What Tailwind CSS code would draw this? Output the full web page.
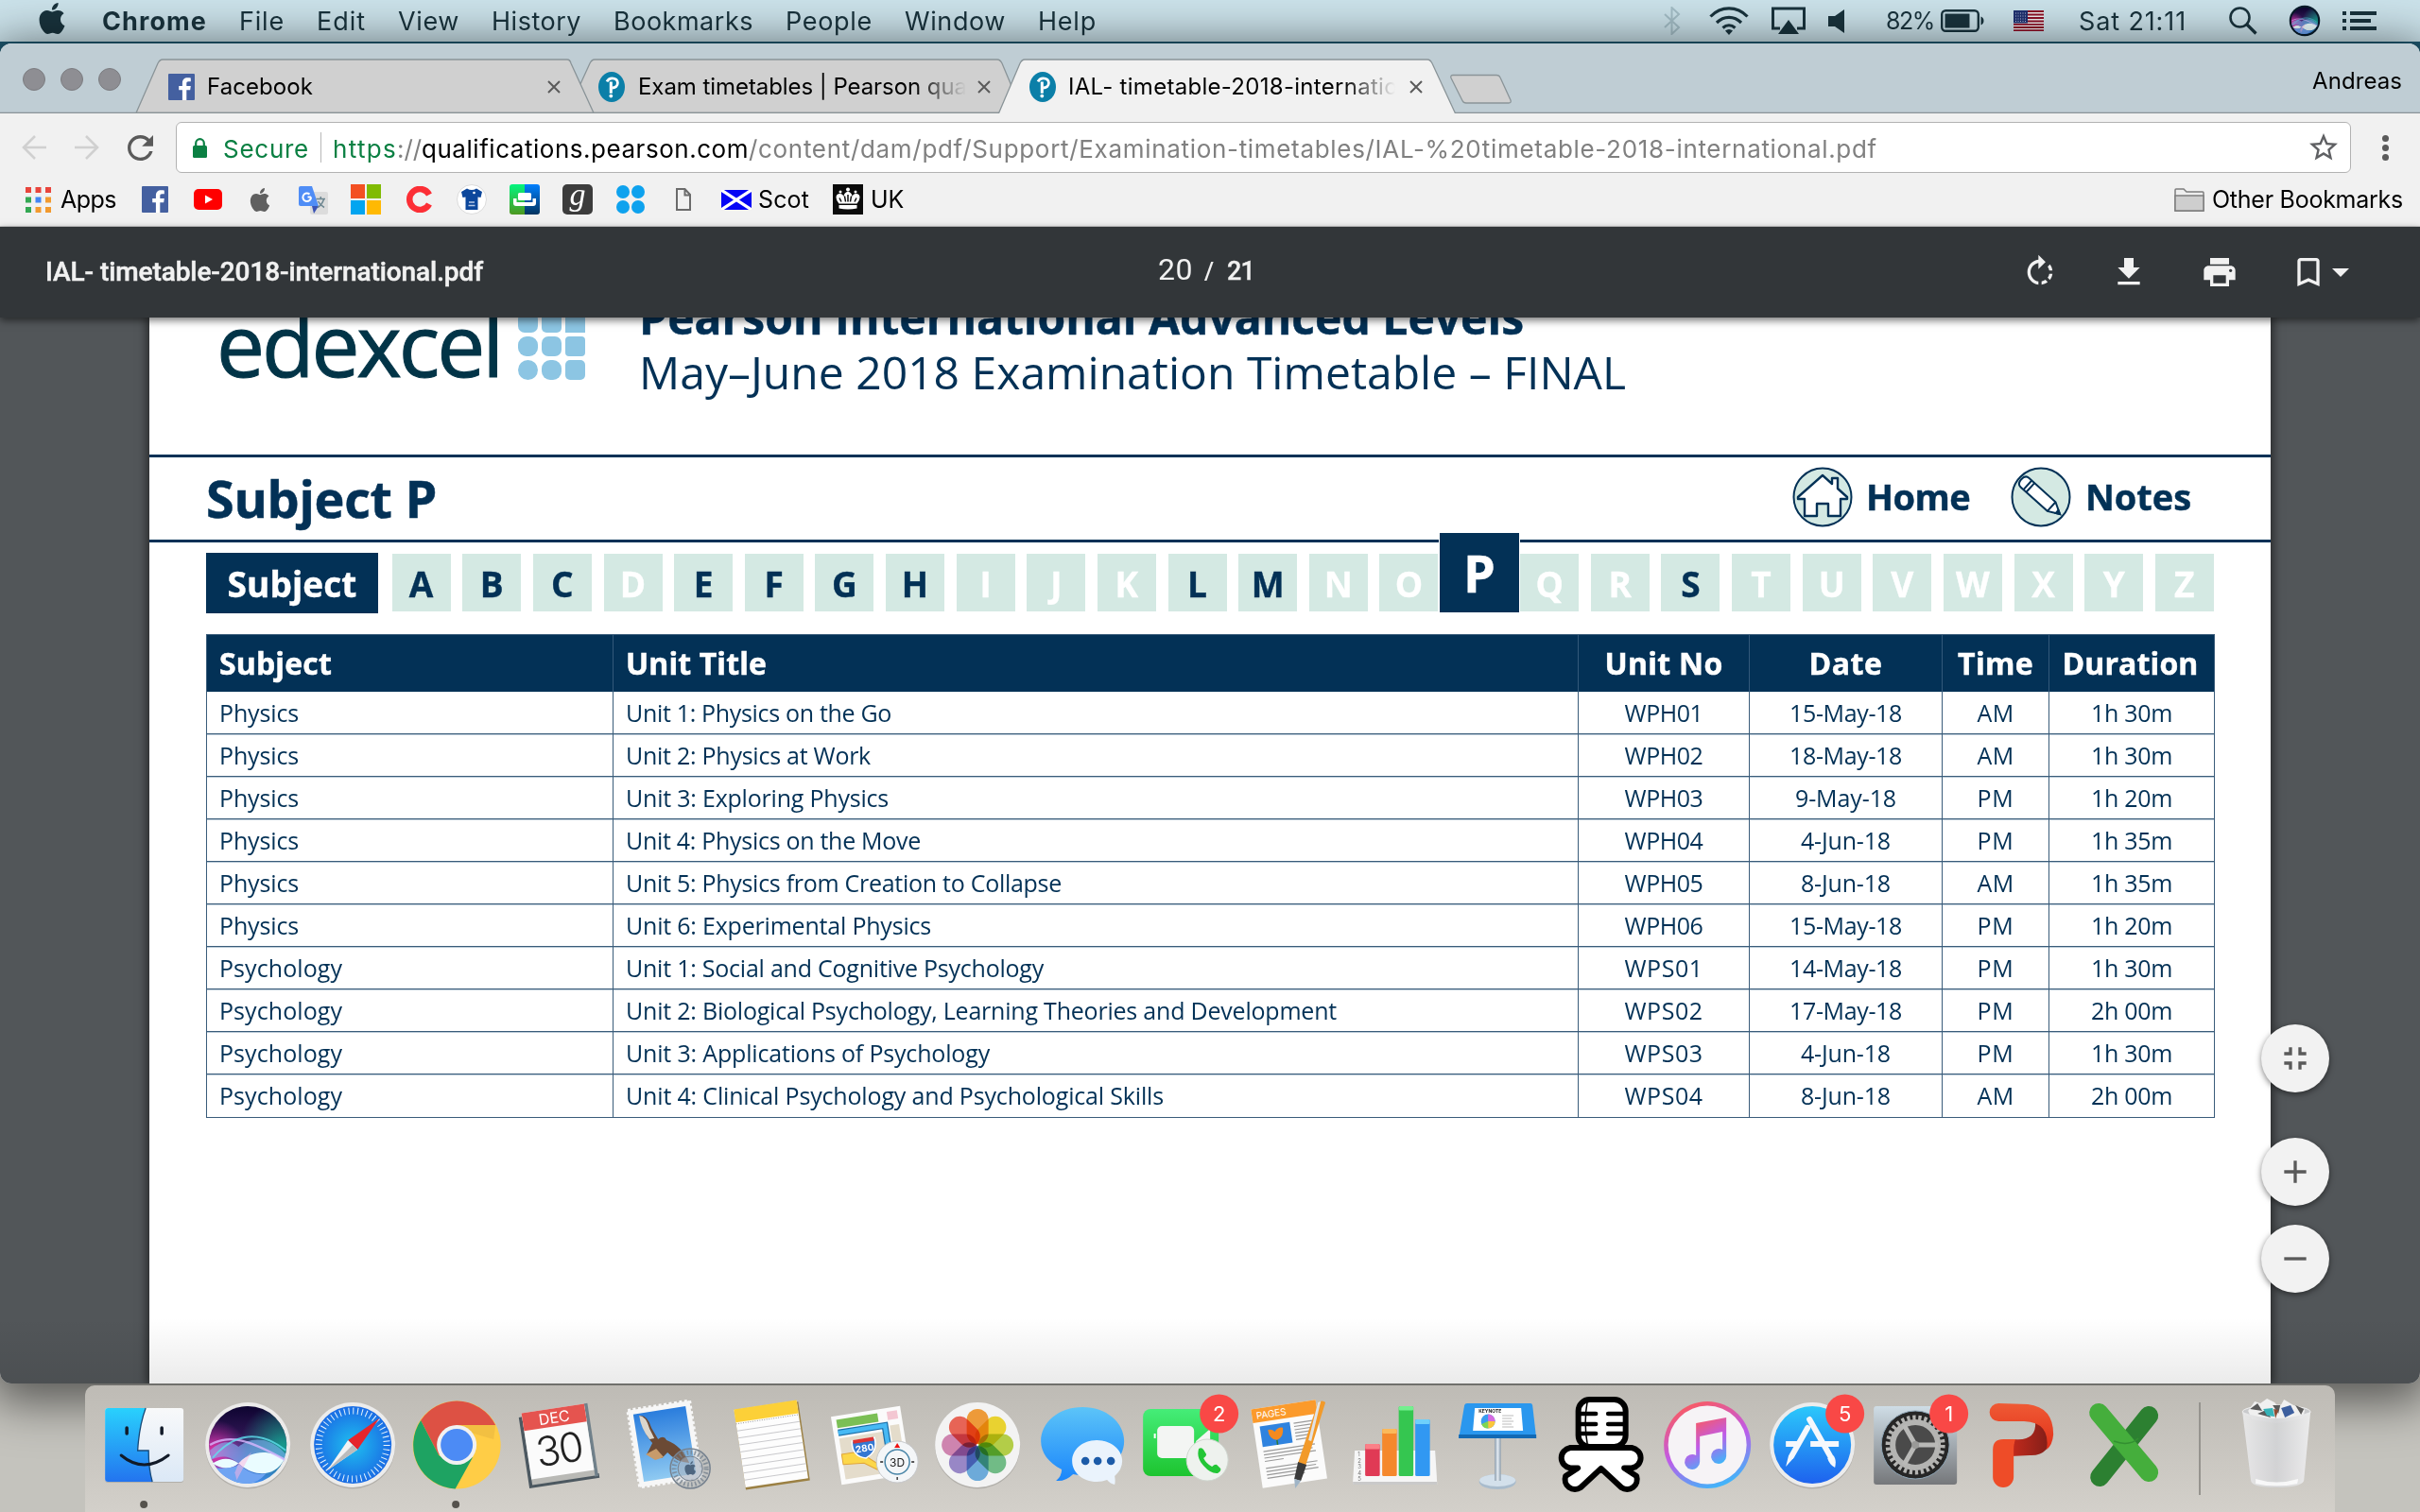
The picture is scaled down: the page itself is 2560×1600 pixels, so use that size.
<!DOCTYPE html>
<html lang="en">
<head>
<meta charset="utf-8">
<title>IAL- timetable-2018-international.pdf</title>
<script src="https://cdn.jsdelivr.net/npm/@tailwindcss/browser@4"></script>
</head>
<body class="w-[2560px] h-[1600px] overflow-hidden flex flex-col bg-linear-to-b from-[#1f5a72] from-10% to-[#c4c3bd] to-80% font-['Inter',sans-serif]">

<svg class="absolute size-0">
  <defs>
    <symbol id="apple" viewBox="2 0 20 24"><path d="M12.152 6.896c-.948 0-2.415-1.078-3.96-1.04-2.04.027-3.91 1.183-4.961 3.014-2.117 3.675-.546 9.103 1.519 12.09 1.013 1.454 2.208 3.09 3.792 3.039 1.52-.065 2.09-.987 3.935-.987 1.831 0 2.35.987 3.96.948 1.637-.026 2.676-1.48 3.676-2.948 1.156-1.688 1.636-3.325 1.662-3.415-.039-.013-3.182-1.221-3.22-4.857-.026-3.04 2.48-4.494 2.597-4.559-1.429-2.09-3.623-2.324-4.39-2.376-2-.156-3.675 1.09-4.61 1.09zM15.53 3.83c.843-1.012 1.4-2.427 1.245-3.83-1.207.052-2.662.805-3.532 1.818-.78.896-1.454 2.338-1.273 3.714 1.338.104 2.715-.688 3.559-1.701"/></symbol>
    <symbol id="fb" viewBox="0 0 28 28"><rect width="28" height="28" rx="1" fill="#4460a0"/><path fill="#fff" d="M19.3 28V17.2h3.9l.6-4.2h-4.5v-2.7c0-1.2.4-2 2.1-2h2.4V4.5c-.4 0-1.9-.2-3.5-.2-3.2 0-5.4 2-5.4 5.6V13h-3.7v4.2h3.7V28z"/></symbol>
    <symbol id="pearson" viewBox="0 0 28 32"><ellipse cx="14" cy="16" rx="14" ry="16" fill="#0b7fa8"/><path d="M9 10.400c1.200-2.400 3-3.600 5.600-3.600 3.400 0 5.800 2 5.800 5 0 3.200-2.400 5.200-6 5.200" fill="none" stroke="#fff" stroke-width="2.800"/><path d="M13.300 10.500v12.200" stroke="#fff" stroke-width="3"/><circle cx="13.300" cy="25.600" r="1.900" fill="#fff"/></symbol>
    <symbol id="close" viewBox="0 0 14 14"><path d="M1 1l12 12M13 1L1 13" stroke="#5a5a5a" stroke-width="2"/></symbol>
    <linearGradient id="siriBg" x2="0" y2="1"><stop offset="0" stop-color="#0d0430"/><stop offset=".35" stop-color="#2c1450"/><stop offset=".6" stop-color="#3c4a9c"/><stop offset="1" stop-color="#3f8ff0"/></linearGradient>
    <radialGradient id="siriGreen" cx=".95" cy=".5" r=".55"><stop offset="0" stop-color="#12a48c" stop-opacity=".9"/><stop offset="1" stop-color="#12a48c" stop-opacity="0"/></radialGradient>
    <radialGradient id="siriPink" cx=".08" cy=".6" r=".42"><stop offset="0" stop-color="#ff2aa0"/><stop offset="1" stop-color="#c030b0" stop-opacity="0"/></radialGradient>
    <symbol id="siri" viewBox="-45 -45 90 90">
      <circle r="42" fill="url(#siriBg)"/>
      <circle r="42" fill="url(#siriGreen)"/>
      <circle r="42" fill="url(#siriPink)"/>
      <path d="M-41 6C-28-6-18-4-10 2C4-10 26-8 41 10L39 18C20 10 4 6-10 20C-22 10-30 12-40 16z" fill="#7fb6f5" opacity=".6"/>
      <path d="M-38 20C-28 13-18 14-10 20C2 6 24 4 39 16C30 34 8 36-10 20C-18 27-28 27-38 20z" fill="#eafcff"/>
      <path d="M-34 25C-22 26-14 24-9 21C0 30 10 33 20 31Q10 42 0 42A42 42 0 0 1-34 25z" fill="#6fa4f2"/>
      <path d="M-10 20L4 8-12 38-14 30z" fill="#ffb4e0" opacity=".5"/>
      <path d="M-41 0C-20-12 0-6 40 16" fill="none" stroke="#d9b6ff" stroke-width="2.500" opacity=".8"/>
      <path d="M-38 14C-14-14 14-16 41 6" fill="none" stroke="#5fe0ee" stroke-width="2" opacity=".8"/>
    </symbol>
  </defs>
</svg>

<!-- Menu bar -->
<header class="h-11 shrink-0 flex items-center pl-[41px] pr-[46px] bg-[#cbe2ea] text-[#19333d] text-[27px] leading-none">
  <svg class="w-[28px] h-[33px] -mt-[5px] mr-[39px] shrink-0 fill-[#19333d]"><use href="#apple"/></svg>
  <nav class="flex gap-[34px]">
    <span data-w="111" class="font-bold">Chrome</span><span data-w="48">File</span><span data-w="52">Edit</span><span data-w="65">View</span><span data-w="95">History</span><span data-w="148">Bookmarks</span><span data-w="92">People</span><span data-w="107">Window</span><span data-w="62">Help</span>
  </nav>
  <div class="ml-auto flex items-center">
    <svg class="w-[18px] h-[30px]" viewBox="0 0 18 30" fill="none" stroke="#a3bdc6" stroke-width="2"><path d="M1 8l15 14-7.500 7V1L16 8 1 22"/></svg>
    <svg class="ml-[30px] w-[42px] h-[30px]" viewBox="0 0 42 30" fill="none" stroke="#19333d" stroke-width="3.200"><path d="M1.500 10.500C12.500-1 29.500-1 40.500 10.500M8 17c7.500-7.500 18.500-7.500 26 0M14.500 22.500c4-3.500 9-3.500 13 0"/><path d="M17 25.500q4-3 8 0L21 30z" fill="#19333d" stroke="none"/></svg>
    <svg class="ml-[24px] w-[36px] h-[30px]" viewBox="0 0 36 30"><path d="M9 23H1.500V2h33v21H27" fill="none" stroke="#19333d" stroke-width="3"/><path d="M18 14l11 15H7z" fill="#19333d"/></svg>
    <svg class="ml-[24px] w-[17px] h-[25px]" viewBox="0 0 17 25"><path d="M0 7h7l10-7v25L7 18H0z" fill="#19333d"/></svg>
    <span class="ml-[44px] text-[25px]" data-w="51">82%</span>
    <svg class="ml-[7px] w-[47px] h-[24px]" viewBox="0 0 47 24"><rect x="1.200" y="1.200" width="38.600" height="21.600" rx="4" fill="none" stroke="#19333d" stroke-width="2.400"/><rect x="4.500" y="4.500" width="26" height="15" fill="#19333d"/><path d="M42.500 7.500c4 1 4 8 0 9z" fill="#19333d"/></svg>
    <svg class="ml-[30px] w-[32px] h-[22px]" viewBox="0 0 32 22"><rect width="32" height="22" fill="#f0f0f0"/><path d="M0 1h32M0 4.500h32M0 8h32M0 11.500h32M0 14.800h32M0 18h32M0 21.200h32" stroke="#8d1027" stroke-width="1.800"/><rect width="15" height="13.500" fill="#1f3170"/><path d="M2 3h12M2 6h12M2 9h12M2 11.500h12" stroke="#b9c3dd" stroke-width="1" stroke-dasharray="1 1.500"/></svg>
    <span class="ml-[37px]" data-w="114">Sat 21:11</span>
    <svg class="ml-[45px] w-[30px] h-[30px]" viewBox="0 0 30 30" fill="none" stroke="#19333d" stroke-width="2.600"><circle cx="11.500" cy="11.500" r="10"/><path d="M18.500 18.500l10 10" stroke-width="3.200"/></svg>
    <svg class="ml-[33px] w-[34px] h-[34px]" viewBox="-45 -45 90 90"><circle r="43" fill="#071a2a"/><use href="#siri" x="-40" y="-40" width="80" height="80"/></svg>
    <svg class="ml-[23px] w-[36px] h-[20px]" viewBox="0 0 36 20"><path d="M0 2h4M8 2h28M0 10h4M8 10h22M0 18h4M8 18h28" stroke="#19333d" stroke-width="4"/></svg>
  </div>
</header>

<!-- Browser window -->
<main class="relative mt-[2px] h-[1418px] shrink-0 flex flex-col overflow-hidden rounded-xl bg-[#f1f1f1] shadow-[0_10px_50px_10px_rgba(0,0,0,.55)]">

  <!-- Tab strip -->
  <div class="relative h-[74px] shrink-0 bg-[#bfcdd4]">
    <svg class="absolute inset-0 w-[2560px] h-[74px]" viewBox="0 0 2560 74">
      <path d="M600 73.500L624 21q2-4 5-4h426q3 0 5 4l22 52.500z" fill="#d0d0d0" stroke="#8a9498" stroke-width="1.300"/>
      <path d="M144 73.500L167 21q2-4 5-4h428q3 0 4 4l24 52.500z" fill="#d0d0d0" stroke="#8a9498" stroke-width="1.300"/>
      <path d="M0 73.400h2560" stroke="#8a9498" stroke-width="1.300"/>
      <path d="M1056 75L1079 21q2-4 5-4h426q3 0 5 4l25 54z" fill="#f1f1f1" stroke="#8a9498" stroke-width="1.300"/>
      <path d="M1537 33.500h46q3 0 4 2.500l11 24q1 3-2 3h-45q-3 0-4-2.500l-12-24q-1-3 2-3z" fill="#d0d0d0" stroke="#8a9498" stroke-width="1.300"/>
    </svg>
    <div class="relative flex items-center h-[56px] top-[17px] pl-[24px] pr-[19px] text-[24px] leading-none text-black">
      <div class="flex gap-4 -mt-[14px]"><i class="size-6 rounded-full bg-[#8e8e93] border border-[#7b7c80]"></i><i class="size-6 rounded-full bg-[#8e8e93] border border-[#7b7c80]"></i><i class="size-6 rounded-full bg-[#8e8e93] border border-[#7b7c80]"></i></div>
      <svg class="ml-[50px] mt-px size-[28px]"><use href="#fb"/></svg>
      <span class="ml-[13px] mt-px" data-w="112">Facebook</span>
      <svg class="ml-[248px] mt-[2px] size-[14px]"><use href="#close"/></svg>
      <svg class="ml-[40px] mt-[2px] w-[28px] h-[32px]"><use href="#pearson"/></svg>
      <div class="ml-[14px] mt-px w-[347px] h-8 flex items-center shrink-0 overflow-hidden [mask-image:linear-gradient(to_right,black_84%,transparent)]"><span data-w="348">Exam timetables | Pearson qua</span></div>
      <svg class="ml-[12px] mt-[2px] size-[14px]"><use href="#close"/></svg>
      <svg class="ml-[41px] mt-[2px] w-[28px] h-[32px]"><use href="#pearson"/></svg>
      <div class="ml-[13px] mt-px w-[346px] h-8 flex items-center shrink-0 overflow-hidden [mask-image:linear-gradient(to_right,black_84%,transparent)]"><span data-w="348">IAL- timetable-2018-internatio</span></div>
      <svg class="ml-[15px] mt-[2px] size-[14px]"><use href="#close"/></svg>
      <span class="ml-auto -mt-[10px]" data-w="95">Andreas</span>
    </div>
  </div>

  <!-- Address bar -->
  <div class="h-[63px] pt-[9px] shrink-0 flex items-center pl-[23px]">
    <svg class="w-[26px] h-[26px]" viewBox="0 0 26 26" fill="none" stroke="#d0d0d0" stroke-width="2.600"><path d="M26 13H2M14 1L2 13l12 12"/></svg>
    <svg class="ml-[30px] w-[26px] h-[26px]" viewBox="0 0 26 26" fill="none" stroke="#d0d0d0" stroke-width="2.600"><path d="M0 13h24M12 1l12 12-12 12"/></svg>
    <svg class="ml-[30px] w-[27px] h-[27px]" viewBox="4 4 16 16"><path fill="#5a5a5a" d="M17.650 6.350C16.200 4.900 14.210 4 12 4c-4.420 0-7.990 3.580-7.990 8s3.570 8 7.990 8c3.730 0 6.840-2.550 7.730-6h-2.080c-.82 2.330-3.040 4-5.650 4-3.310 0-6-2.690-6-6s2.690-6 6-6c1.660 0 3.140.69 4.220 1.780L13 11h7V4l-2.350 2.350z"/></svg>
    <div class="ml-[24px] w-[2301px] h-[54px] flex items-center rounded-md border border-[#b2b2b2] bg-white pl-[17px] pr-[13px] text-[26px] leading-none">
      <svg class="w-[15px] h-[21px]" viewBox="0 0 15 21"><rect y="8" width="15" height="13" rx="1.500" fill="#0b8043"/><path d="M3.200 9V5.500a4.300 4.300 0 0 1 8.600 0V9" fill="none" stroke="#0b8043" stroke-width="2.200"/></svg>
      <span class="ml-[17px] mt-[3px] text-[#0b8043]" data-w="91">Secure</span>
      <i class="ml-[12px] w-px h-8 bg-[#b8b8b8]"></i>
      <div class="ml-[12px] mt-[3px] flex"><span class="text-[#0b8043]" data-w="68">https</span><span class="text-[#808080]" data-w="26">://</span><span class="text-black" data-w="346">qualifications.pearson.com</span><span class="text-[#808080]" data-w="1193">/content/dam/pdf/Support/Examination-timetables/IAL-%20timetable-2018-international.pdf</span></div>
      <svg class="ml-auto size-[30px]" viewBox="2 2 20 20"><path fill="#5f6063" d="M22 9.240l-7.190-.62L12 2 9.190 8.630 2 9.240l5.460 4.730L5.820 21 12 17.270 18.180 21l-1.630-7.030L22 9.240zM12 15.400l-3.760 2.270 1-4.280-3.320-2.880 4.380-.38L12 6.100l1.710 4.040 4.380.38-3.320 2.880 1 4.280L12 15.400z"/></svg>
    </div>
    <div class="ml-[33px] flex flex-col gap-[3px]"><i class="size-[7px] rounded-full bg-[#5a5a5a]"></i><i class="size-[7px] rounded-full bg-[#5a5a5a]"></i><i class="size-[7px] rounded-full bg-[#5a5a5a]"></i></div>
  </div>

  <!-- Bookmarks bar -->
  <div class="h-[57px] shrink-0 flex items-center pl-[27px] pr-[18px] border-b border-[#cfcfcf] text-[25px] leading-none text-black">
    <svg class="size-[27px]" viewBox="0 0 27 27"><path fill="#e8453c" d="M0 0h6v6H0zM10.500 0h6v6h-6zM21 0h6v6h-6z"/><path fill="#34a853" d="M0 10.500h6v6H0zM0 21h6v6H0z"/><path fill="#4285f4" d="M10.500 10.500h6v6h-6z"/><path fill="#f29a2e" d="M21 10.500h6v6h-6zM10.500 21h6v6h-6zM21 21h6v6h-6z"/></svg>
    <span class="ml-[10px]" data-w="59">Apps</span>
    <svg class="ml-[27px] size-[28px]"><use href="#fb"/></svg>
    <svg class="ml-[27px] w-[30px] h-[22px]" viewBox="0 0 30 22"><rect width="30" height="22" rx="5" fill="#f00"/><path d="M12 6.500l8 4.500-8 4.500z" fill="#fff"/></svg>
    <svg class="ml-[29px] w-[22px] h-[25px] fill-[#606060]"><use href="#apple"/></svg>
    <svg class="ml-[30px] w-[31px] h-[31px]" viewBox="0 0 31 31"><rect x="12" y="7" width="19" height="24" rx="2" fill="#dcdcdc"/><path d="M14 22h7l-5 8z" fill="#3a52b4"/><path d="M2 1h12l7 21H2q-2 0-2-2V3q0-2 2-2z" fill="#4f8df6"/><path d="M13 10.500H9.500M13 10.500a4.300 4.300 0 1 1-1.500-3" transform="translate(0 2)" fill="none" stroke="#fff" stroke-width="2"/><path d="M18.500 14.500h9.500M23.300 12v2.500M26.500 15q-2 6-6.500 8.500M20.500 17q2 4 6.500 6.500" fill="none" stroke="#6d8690" stroke-width="1.500"/></svg>
    <div class="ml-[24px] grid grid-cols-2 gap-[2px] size-[32px]"><i class="bg-[#f35022]"></i><i class="bg-[#80bb03]"></i><i class="bg-[#03a5f0]"></i><i class="bg-[#ffb903]"></i></div>
    <svg class="ml-[26px] w-[28px] h-[28px]" viewBox="0 0 28 28"><path d="M25 9A11 11 0 1 0 25 19" fill="none" stroke="#fc2f36" stroke-width="6.500"/></svg>
    <svg class="ml-[26px] size-[32px]" viewBox="0 0 32 32"><circle cx="16" cy="16" r="15.500" fill="#fff" stroke="#dadada"/><path d="M11 4.500q5 3 10 0l6 3.500-1.500 6-3-.5V27h-13V13.500l-3 .5L5 8z" fill="#0c479c"/><path d="M13 19h6M12.500 22.500h7" stroke="#b6c9e6" stroke-width="1.500"/><circle cx="18.500" cy="9" r="1.300" fill="#fff"/></svg>
    <svg class="ml-[24px] size-[32px]" viewBox="0 0 32 32"><defs><linearGradient id="gl" x2="0" y2="1"><stop stop-color="#02f57f"/><stop offset="1" stop-color="#4d9820"/></linearGradient><linearGradient id="gr" x2="0" y2="1"><stop stop-color="#0080ff"/><stop offset="1" stop-color="#02345f"/></linearGradient></defs><path d="M3 0h13v32H3q-3 0-3-3V3q0-3 3-3z" fill="url(#gl)"/><path d="M16 0h13q3 0 3 3v26q0 3-3 3H16z" fill="url(#gr)"/><rect x="9" y="9" width="14" height="8" rx="1.500" fill="#fff"/><path d="M4 15h3.500v4h17v-4H28v5q0 3-3 3H7q-3 0-3-3z" fill="#fff"/></svg>
    <div class="ml-[24px] size-[32px] rounded-[5px] bg-[#3c3c3c] text-white text-[34px] leading-[22px] italic text-center font-['Liberation_Serif',serif]">g</div>
    <div class="ml-[25px] grid grid-cols-2 gap-[2px] size-[30px]"><i class="rounded-full bg-[#0ea2ee]"></i><i class="rounded-full bg-[#0ea2ee]"></i><i class="rounded-full bg-[#0ea2ee]"></i><i class="rounded-full bg-[#0ea2ee]"></i></div>
    <svg class="ml-[33px] w-[16px] h-[24px]" viewBox="0 0 16 24" fill="none" stroke="#6b6b6b" stroke-width="2"><path d="M1 1h8.500L15 7v16H1zM9.500 1v6.500H15"/></svg>
    <svg class="ml-[32px] w-[32px] h-[21px]" viewBox="0 0 32 21"><rect width="32" height="21" fill="#0505f5"/><path d="M0 0l32 21M32 0L0 21" stroke="#fff" stroke-width="3.200"/></svg>
    <span class="ml-[7px]" data-w="54">Scot</span>
    <svg class="ml-[25px] size-[32px]" viewBox="0 0 32 32"><rect width="32" height="32" fill="#0b0b0b"/><g fill="#fff"><path d="M3.500 14q0-4 4-4 3 0 4 3 0-4 4.500-5.500Q20.500 9 20.500 13q1-3 4-3 4 0 4 4 0 3-3 6.500h-19Q3.500 17 3.500 14z"/><circle cx="16" cy="5.500" r="2"/><circle cx="8" cy="8" r="1.500"/><circle cx="24" cy="8" r="1.500"/><path d="M6.500 22h19v3.500q-9.500 2-19 0z"/></g><path d="M7 14.500l2 4M12.500 12.500l1 6M16 11v7.500M19.500 12.500l-1 6M25 14.500l-2 4" stroke="#0b0b0b" stroke-width="1.500"/></svg>
    <span class="ml-[8px]" data-w="35">UK</span>
    <svg class="ml-auto w-[32px] h-[25px]" viewBox="0 0 32 25" stroke="#7e7e7e" stroke-width="1.500"><path d="M1 24V2q0-1 1-1h8l3 3h17q1 0 1 1v19z" fill="#eee"/><path d="M1 8h30v16H1z" fill="#cecece"/></svg>
    <span class="ml-[8px]" data-w="202">Other Bookmarks</span>
  </div>

  <!-- Viewer toolbar -->
  <div class="relative z-10 h-[96px] shrink-0 flex items-center bg-[#323639] pl-[48px] text-[#f1f1f1] font-['Roboto',sans-serif] shadow-[0_3px_8px_rgba(0,0,0,.55)]">
    <span class="text-[28px] font-medium [-webkit-text-stroke:0.5px]" data-w="463">IAL- timetable-2018-international.pdf</span>
    <span class="ml-[714px] -mt-[6px] text-[32px]" data-w="37">20</span>
    <span class="ml-[12px] -mt-[2px] text-[26px] font-medium" data-w="12">/</span>
    <span class="ml-[12px] -mt-[2px] text-[27px] font-medium [-webkit-text-stroke:0.3px]" data-w="29">21</span>
    <div class="ml-[811px] flex items-center">
      <svg class="size-[40px]" viewBox="0 0 24 24" fill="#f1f1f1"><path d="M15.550 5.550L11 1v3.070C7.060 4.560 4 7.920 4 12s3.050 7.440 7 7.930v-2.020c-2.840-.48-5-2.940-5-5.910s2.160-5.430 5-5.910V10l4.550-4.450zM19.930 11c-.17-1.390-.72-2.730-1.620-3.890l-1.420 1.420c.54.75.88 1.600 1.020 2.470h2.020zM13 17.900v2.020c1.390-.17 2.740-.71 3.900-1.610l-1.440-1.440c-.75.54-1.590.89-2.460 1.030zm3.890-2.420l1.420 1.410c.9-1.160 1.450-2.500 1.620-3.890h-2.020c-.14.87-.48 1.720-1.020 2.480z"/></svg>
      <svg class="ml-[54px] size-[40px]" viewBox="0 0 24 24" fill="#f1f1f1"><path d="M19 9h-4V3H9v6H5l7 7 7-7zM5 18v2h14v-2H5z"/></svg>
      <svg class="ml-[56px] size-[40px]" viewBox="0 0 24 24" fill="#f1f1f1"><path d="M19 8H5c-1.660 0-3 1.340-3 3v6h4v4h12v-4h4v-6c0-1.660-1.340-3-3-3zm-3 11H8v-5h8v5zm3-7c-.55 0-1-.45-1-1s.45-1 1-1 1 .45 1 1-.45 1-1 1zm-1-9H6v4h12V3z"/></svg>
      <svg class="ml-[54px] size-[40px]" viewBox="0 0 24 24" fill="#f1f1f1"><path d="M17 3H7c-1.100 0-1.990.9-1.990 2L5 21l7-3 7 3V5c0-1.100-.9-2-2-2zm0 15l-5-2.180L7 18V5h10v13z"/></svg>
      <svg class="ml-[5px] w-[18px] h-[9px]" viewBox="0 0 18 9" fill="#f1f1f1"><path d="M0 0h18L9 9z"/></svg>
    </div>
  </div>

  <!-- Document -->
  <div class="relative flex-1 flex justify-center overflow-hidden bg-[#525659]">
    <article class="w-[2244px] flex flex-col bg-white text-[#033156] font-['Open_Sans',sans-serif] shadow-[0_0_10px_2px_rgba(0,0,0,.6)]">
      <div class="h-[145px] shrink-0 flex items-start overflow-hidden pl-[71px]">
        <span class="-mt-[17px] text-[91px] leading-[90px] text-[#023447] [-webkit-text-stroke:1px]" data-w="301">edexcel</span>
        <div class="ml-[18px] -mt-[5px] grid grid-cols-3 gap-[4px] w-[71px] h-[71px]">
          <i class="bg-[#8cc5e3] rounded-[7px]"></i><i class="bg-[#8cc5e3] rounded-[5px]"></i><i class="bg-[#8cc5e3]"></i>
          <i class="bg-[#8cc5e3] rounded-[9px]"></i><i class="bg-[#8cc5e3] rounded-[7px]"></i><i class="bg-[#8cc5e3] rounded-[4px]"></i>
          <i class="bg-[#8cc5e3] rounded-full"></i><i class="bg-[#8cc5e3] rounded-[9px]"></i><i class="bg-[#8cc5e3] rounded-[5px]"></i>
        </div>
        <div class="ml-[57px] -mt-[29px] flex flex-col text-[48px] leading-[58px]">
          <span class="font-bold [-webkit-text-stroke:0.5px]" data-w="936">Pearson International Advanced Levels</span>
          <span data-w="1044">May–June 2018 Examination Timetable – FINAL</span>
        </div>
      </div>
      <div class="h-[93px] shrink-0 flex items-center border-y-[3px] border-[#033156] pl-[60px] pr-[84px] font-bold text-[38px] [&>span]:[-webkit-text-stroke:0.5px]">
        <span class="text-[54px]" data-w="244">Subject P</span>
        <svg class="ml-auto size-[64px] -mt-[4px]" viewBox="-32 -32 64 64" stroke="#033156" stroke-width="2"><circle r="30.500" fill="#d4e9e3"/><path d="M0-23L-26 0v2h7v18h13V7H6v13h13V2h7V0L16-9v-11h-6v6z" fill="#fff" stroke-width="2.400" stroke-linejoin="round"/></svg>
        <span class="ml-[14px] -mt-[4px]" data-w="110">Home</span>
        <svg class="ml-[43px] size-[64px] -mt-[4px]" viewBox="-32 -32 64 64" stroke="#033156" stroke-width="2"><circle r="30.500" fill="#d4e9e3"/><g transform="rotate(42)" fill="#fff"><path d="M-23-6.500H15L27 0 15 6.500H-23q-5 0-5-6.500t5-6.500z"/><path d="M-19-6.500v13M-15-6.500v13M15-6.500v13"/><path d="M23-2l4 2-4 2z" fill="#033156"/></g></svg>
        <span class="ml-[15px] -mt-[4px]" data-w="112">Notes</span>
      </div>
      <div id="letters" class="h-[75px] shrink-0 flex items-start pt-[11px] pl-[60px] font-bold text-[37px] [-webkit-text-stroke:0.4px]">
        <div class="w-[182px] h-[64px] pt-px mr-[2px] shrink-0 flex items-center justify-center bg-[#033156] text-white"><span data-w="137">Subject</span></div>
      </div>
      <div id="units" class="mt-[22px] ml-[60px] w-[2125px] border border-[#3a5c7a] text-[25px]">
        <div class="grid grid-cols-[430px_1021px_181px_204px_113px_174px] h-[60px] items-stretch bg-[#033156] text-white text-[32px] font-bold [-webkit-text-stroke:0.5px]">
          <div class="flex items-center pl-[13px] border-r border-[#33597a]"><span data-w="119">Subject</span></div>
          <div class="flex items-center pl-[13px] border-r border-[#33597a]"><span data-w="149">Unit Title</span></div>
          <div class="flex items-center justify-center border-r border-[#33597a]"><span data-w="125">Unit No</span></div>
          <div class="flex items-center justify-center border-r border-[#33597a]"><span data-w="78">Date</span></div>
          <div class="flex items-center justify-center border-r border-[#33597a]"><span data-w="80">Time</span></div>
          <div class="flex items-center justify-center pr-[3px]"><span data-w="144">Duration</span></div>
        </div>
      </div>
    </article>
    <div class="absolute bottom-0 inset-x-0 h-[70px] bg-linear-to-b from-black/0 to-black/8"></div>
    <div class="absolute left-[2392px] top-[748px] flex flex-col">
      <button class="size-[72px] rounded-full bg-[#f2f2f2] shadow-[0_2px_6px_rgba(0,0,0,.5)] grid place-items-center"><svg class="size-[40px]" viewBox="0 0 24 24" fill="#5a5a5a"><path d="M5 16h3v3h2v-5H5v2zm3-8H5v2h5V5H8v3zm6 11h2v-3h3v-2h-5v5zm2-11V5h-2v5h5V8h-3z"/></svg></button>
      <button class="mt-[48px] size-[72px] rounded-full bg-[#f2f2f2] shadow-[0_2px_6px_rgba(0,0,0,.5)] grid place-items-center"><svg class="size-[40px]" viewBox="0 0 24 24" fill="#5a5a5a"><path d="M19 13h-6v6h-2v-6H5v-2h6V5h2v6h6v2z"/></svg></button>
      <button class="mt-[20px] size-[72px] rounded-full bg-[#f2f2f2] shadow-[0_2px_6px_rgba(0,0,0,.5)] grid place-items-center"><svg class="size-[40px]" viewBox="0 0 24 24" fill="#5a5a5a"><path d="M19 13H5v-2h14v2z"/></svg></button>
    </div>
  </div>
</main>

<!-- Dock -->
<footer class="relative mt-[2px] ml-[90px] w-[2380px] h-[134px] shrink-0 flex pl-[7px] rounded-t-[10px] bg-linear-to-b from-[#bebbb5] to-[#d3d0ca] [&>svg]:w-[110.3px] [&>svg]:h-[134px] [&>svg]:shrink-0 [&>svg]:overflow-visible">
  <!-- Finder -->
  <svg viewBox="-55 -63 110 134"><defs><linearGradient id="fi" x2="0" y2="1"><stop stop-color="#29d1fd"/><stop offset="1" stop-color="#2374ef"/></linearGradient><linearGradient id="fw" x2="0" y2="1"><stop stop-color="#f8f9fa"/><stop offset="1" stop-color="#dbe8f6"/></linearGradient></defs>
    <rect x="-41" y="-38" width="83" height="78" rx="3" fill="#0002"/><rect x="-41" y="-39" width="83" height="78" rx="3" fill="url(#fw)"/>
    <path d="M2-39Q-5-20-6.500 6H5Q5 25 9 39H-38q-3 0-3-3V-36q0-3 3-3z" fill="url(#fi)"/><path d="M2-39Q-5-20-6.500 6H5Q5 25 9 39" fill="none" stroke="#174a78" stroke-width="1.300"/>
    <path d="M-18-18v6M19-18v6" stroke="#111a28" stroke-width="3.500" stroke-linecap="round"/><path d="M-24 11Q0 31 26 11" fill="none" stroke="#111a28" stroke-width="3" stroke-linecap="round"/><circle cy="63" r="4" fill="#55524c"/></svg>
  <!-- Siri -->
  <svg viewBox="-55 -63 110 134"><circle cy="1.500" r="45" fill="#0002"/><circle r="45" fill="#ecebea"/><use href="#siri" x="-44" y="-44" width="88" height="88"/></svg>
  <!-- Safari -->
  <svg viewBox="-55 -63 110 134"><defs><radialGradient id="sf"><stop stop-color="#1fc0f0"/><stop offset="1" stop-color="#1a6ce4"/></radialGradient></defs><circle cy="1.500" r="45" fill="#0002"/><circle r="45" fill="#ececec"/><circle r="41" fill="url(#sf)"/><circle r="36" fill="none" stroke="#e8f4fc" stroke-width="7" stroke-dasharray="1 3.710"/><path d="M28-28L5 5-5-5z" fill="#e6252b"/><path d="M-27 27L5 5-5-5z" fill="#f3f3f3"/><path d="M-27 27L5 5 0 0z" fill="#bcbcbc"/></svg>
  <!-- Chrome -->
  <svg viewBox="-55 -63 110 134"><circle r="46.500" fill="#ffcd46"/><path d="M0-46.500A46.500 46.500 0 0 1 41-21H0L-19 11-38-26A46.500 46.500 0 0 1 0-46.500z" fill="#dd5144"/><path d="M-38-26A46.500 46.500 0 0 0-1.500 46.500L17 13 0 21-19 11z" fill="#1ea362"/><path d="M41-21H0l-3 3 42 12z" fill="#d9a93b" opacity=".35"/><circle r="21" fill="#f1f1f1"/><circle r="17" fill="#4c8bf5"/><circle cx="-1" cy="63" r="4" fill="#55524c"/></svg>
  <!-- Calendar -->
  <svg viewBox="-55 -63 110 134"><g transform="translate(-3 -3) rotate(-8.600)"><path d="M-37-32h4v71h71v5h-75z" fill="#4c5860"/><path d="M33-36h4v78h-4z" fill="#70808a"/><rect x="-33.500" y="-33" width="67" height="74" fill="#b9b9b5"/><rect x="-33.500" y="-36" width="67" height="71" fill="#fbfbfb"/><rect x="-33.500" y="-36" width="67" height="19" fill="#e5544f"/><text y="-20.500" font-size="16" text-anchor="middle" fill="#fff">DEC</text><text y="23" font-size="43" font-weight="300" text-anchor="middle" fill="#222" letter-spacing="-2">30</text></g></svg>
  <!-- Mail -->
  <svg viewBox="-55 -63 110 134"><defs><linearGradient id="sky" x2="0" y2="1"><stop stop-color="#2a7ddd"/><stop offset="1" stop-color="#8fcaf2"/></linearGradient></defs><g transform="translate(0 -1) rotate(-9)"><rect x="-33" y="-41" width="66" height="82" fill="#f7f7f7" stroke="#f7f7f7" stroke-width="3.500" stroke-dasharray="3 2.500"/><rect x="-28" y="-36" width="56" height="72" fill="url(#sky)"/></g><path d="M-27-31q9-1 13 13l7 12q6-5 9 1 16 6 24 24-14-1-23-11l-6 6-16-4 6-12q-7-8-9-15z" fill="#6b4a35"/><path d="M-27-31q7 0 11 14l5 10-5 1q-9-11-11-25z" fill="#dcd6cc"/><path d="M-20 10l11-6 8 9-9 3z" fill="#c79b6b"/><circle cx="27" cy="25" r="21" fill="#9ba6b540" stroke="#76828f" stroke-width="1.500"/><circle cx="27" cy="25" r="13" fill="#aab6c488" stroke="#76828f"/><circle cx="27" cy="25" r="17" fill="none" stroke="#76828f" stroke-width="5" stroke-dasharray="1.500 2.500" opacity=".8"/><use href="#apple" x="21" y="17" width="12" height="15" fill="#4e6680"/></svg>
  <!-- Notes -->
  <svg viewBox="-55 -63 110 134"><g transform="translate(2 -1) rotate(-8.500)"><rect x="-34" y="-40" width="68.500" height="84" fill="#9b8043"/><rect x="-34" y="-41.500" width="67" height="83" fill="#fdfdfd"/><rect x="-34" y="-42" width="67" height="14" fill="#fcd038"/><path d="M-34-26.500h67" stroke="#999" stroke-dasharray="1 1.500"/><path d="M-34-19h67M-34-11.500h67M-34-4h67M-34 3.500h67M-34 11h67M-34 18.500h67M-34 26h67M-34 33.500h67" stroke="#c9c9cc"/></g></svg>
  <!-- Maps -->
  <svg viewBox="-55 -63 110 134"><g transform="translate(-3 0) rotate(-9)"><rect x="-37" y="-36" width="74" height="73" fill="#fbfbfb"/><rect x="-32" y="-32" width="44" height="9" fill="#7bbf55"/><rect x="22" y="-32" width="11" height="9" fill="#f3c7d2"/><rect x="-32" y="-12" width="48" height="44" fill="#e4dccb"/><rect x="23" y="-17" width="10" height="49" fill="#e4dccb"/><path d="M-32-18H18V20" fill="none" stroke="#1d6fa8" stroke-width="7"/><path d="M-32-18H18V20" fill="none" stroke="#47b9f4" stroke-width="4.500"/><path d="M-32 5h13q7 2 12 6L10 26V32L-10 18-32 16z" fill="#fcd74a" stroke="#e0a63a"/><path d="M-19-7h24q2 15-12 20Q-22 9-19-7z" fill="#3478d2" stroke="#fff" stroke-width="1.500"/><path d="M-18-8h22v4h-22z" fill="#d33"/><text x="-7" y="6" font-size="10" font-weight="700" text-anchor="middle" fill="#fff">280</text></g><circle cx="25" cy="18" r="22" fill="#f4f6f8" stroke="#c6c8cb"/><circle cx="25" cy="18" r="13" fill="none" stroke="#4a86a8" stroke-width="1.500"/><text x="25" y="22.500" font-size="12" text-anchor="middle" fill="#222">3D</text><path d="M25-2l3 5h-6z" fill="#e11"/><path d="M7 18h3M40 18h3M25 34v3" stroke="#222" stroke-width="1.300"/></svg>
  <!-- Photos -->
  <svg viewBox="-55 -63 110 134"><circle cy="1.500" r="45" fill="#0002"/><circle r="45" fill="#f3f3f3"/><g class="[&>rect]:mix-blend-multiply"><rect x="-11.500" y="-38" width="23" height="37" rx="11.500" fill="#f9a23b"/><rect x="-11.500" y="-38" width="23" height="37" rx="11.500" fill="#f5dd32" transform="rotate(45)"/><rect x="-11.500" y="-38" width="23" height="37" rx="11.500" fill="#bcd74b" transform="rotate(90)"/><rect x="-11.500" y="-38" width="23" height="37" rx="11.500" fill="#76c48d" transform="rotate(135)"/><rect x="-11.500" y="-38" width="23" height="37" rx="11.500" fill="#72b3e4" transform="rotate(180)"/><rect x="-11.500" y="-38" width="23" height="37" rx="11.500" fill="#a08ed0" transform="rotate(225)"/><rect x="-11.500" y="-38" width="23" height="37" rx="11.500" fill="#d98bb8" transform="rotate(270)"/><rect x="-11.500" y="-38" width="23" height="37" rx="11.500" fill="#f3695a" transform="rotate(315)"/></g></svg>
  <!-- Messages -->
  <svg viewBox="-55 -63 110 134"><defs><linearGradient id="ms" x2="0" y2="1"><stop stop-color="#5cc4f8"/><stop offset="1" stop-color="#1b86fb"/></linearGradient></defs><path d="M0-40C25-40 44-24 44-4S25 32 0 32q-6 0-10-1-8 8-18 7 6-5 6-12C-36 19-44 8-44-4-44-24-25-40 0-40z" fill="url(#ms)"/><path d="M15-5C30-5 42 5 42 17q0 9-8 16 1 6 0 9-5-1-8-5-5 2-11 2C0 39-11 29-11 17S0-5 15-5z" fill="#eaf3fc"/><g fill="#1c5ba8"><circle cx="3" cy="17" r="4.300"/><circle cx="16" cy="17" r="4.300"/><circle cx="30" cy="17" r="4.300"/></g></svg>
  <!-- FaceTime -->
  <svg viewBox="-55 -63 110 134"><defs><linearGradient id="ft" x2="0" y2="1"><stop stop-color="#45ed78"/><stop offset="1" stop-color="#1dc42f"/></linearGradient></defs><rect x="-46" y="-38" width="80" height="71" rx="8" fill="url(#ft)"/><rect x="-31" y="-20" width="39" height="34" rx="5" fill="#f3f5f3"/><path d="M10-4L25-17V10L10 5z" fill="#f3f5f3"/><path d="M-33.500-12v5" stroke="#fff" stroke-width="2"/><circle cx="22" cy="16" r="22" fill="#eef2ee" stroke="#cfd6cf"/><path d="M13 4q3-2 5 1l3 5q0 2-3 4 3 6 9 9 3-3 5-2l4 4q1 3-3 5-7 1-15-8-8-9-5-18z" fill="#23c636"/><circle cx="34.500" cy="-33" r="20.500" fill="#f94846"/><text x="34.500" y="-25.500" font-size="22" text-anchor="middle" fill="#fff">2</text></svg>
  <!-- Pages -->
  <svg viewBox="-55 -63 110 134"><g transform="translate(-1.500 -1) rotate(-8.500)"><rect x="-34.500" y="-42" width="69" height="84" fill="#fbfbfb"/><rect x="-34.500" y="-42" width="69" height="14.500" fill="#fb9a2b"/><text x="-30" y="-31" font-size="10" fill="#fff">PAGES</text><rect x="-28" y="-23" width="32" height="22" fill="#2f83df"/><path d="M-20-18q4-1 7 3 4-5 9-3 0 10-8 12-8-2-8-12z" fill="#f58a1f"/><path d="M-12-6v5" stroke="#2c7a3a" stroke-width="1.500"/><path d="M8-21h20M8-17.500h18M8-14h20M8-10.500h17M8-7h20M8-3.500h18M-28 4h55M-28 7.500h52M-28 11h55M-28 14.500h20M-28 22h55M-28 25.500h53M-28 29h55M-28 32.500h40" stroke="#9a9a9a" stroke-width="1.200"/></g><path d="M29-45q5-3 8 0L16 22 8 19z" fill="#f29a2a"/><path d="M29-45q2-1 3-1L22-4l-3-1z" fill="#dfe3e8"/><path d="M8 18l9 3-6 17-7-2z" fill="#3a3a3a"/><path d="M4 36l7 2-6 8z" fill="#9fb4c6"/></svg>
  <!-- Numbers -->
  <svg viewBox="-55 -63 110 134"><path d="M-43 6h85l2 33v3h-89v-3z" fill="#f6f6f6"/><path d="M-45 39h89v3h-89z" fill="#c9c9c9"/><g font-size="6" fill="#777"><text x="-40" y="12">1</text><text x="-40" y="18.500">2</text><text x="-40" y="25">3</text><text x="-40" y="31.500">4</text><text x="-40" y="38">5</text></g><rect x="-32" y="-1" width="15.500" height="34" rx="1.500" fill="#e03a55"/><rect x="-32" y="-1" width="15.500" height="5.500" rx="1.500" fill="#fb8088"/><rect x="-14" y="-17" width="15.500" height="50" rx="1.500" fill="#f5882c"/><rect x="-14" y="-17" width="15.500" height="5" rx="1.500" fill="#fbb95a"/><rect x="3.500" y="-41" width="15.500" height="74" rx="1.500" fill="#35c650"/><rect x="3.500" y="-41" width="15.500" height="4.500" rx="1.500" fill="#74f08f"/><rect x="21" y="-27" width="15.500" height="60" rx="1.500" fill="#3198f2"/><rect x="21" y="-27" width="15.500" height="5" rx="1.500" fill="#6fd0fb"/></svg>
  <!-- Keynote -->
  <svg viewBox="-55 -63 110 134"><defs><linearGradient id="pole"><stop stop-color="#8b9cac"/><stop offset=".5" stop-color="#e3ebf2"/><stop offset="1" stop-color="#8b9cac"/></linearGradient></defs><ellipse cx="-2" cy="39" rx="19.500" ry="8" fill="#a9bccd"/><ellipse cx="-2" cy="37.500" rx="19" ry="6.500" fill="#d3e0eb"/><rect x="-5" y="-8" width="6.500" height="46" fill="url(#pole)"/><path d="M-34-44h67q1.500 0 2 2l4 35h-82l6-35q.500-2 3-2z" fill="#2a97ee"/><path d="M-43-11h82v4h-82z" fill="#1269b4"/><path d="M-26-39h49l2 24h-53z" fill="#fff"/><text x="-22" y="-34" font-size="5" font-weight="700" fill="#222">KEYNOTE</text><circle cx="-12" cy="-25" r="7.500" fill="#3a9df0"/><path d="M-12-25v-7.500a7.500 7.500 0 0 1 7.500 7.500z" fill="#d66be0"/><path d="M-12-25h7.500a7.500 7.500 0 0 1-7.500 7.500z" fill="#fcc63a"/><path d="M-12-25v7.500a7.500 7.500 0 0 1-7-4.500z" fill="#7fd552"/><path d="M3-31h12M3-28h10M3-25h12M3-22h10M3-19h12" stroke="#bbb" stroke-width="1"/></svg>
  <!-- Microphone -->
  <svg viewBox="-55 -63 110 134"><g fill="#fff" stroke="#000" stroke-width="6" stroke-linejoin="round"><path d="M-35 3H30a12 11 0 0 1 0 21.500H22L35 33a10.500 10.500 0 0 1-16 12L-2.500 25-24 45a10.500 10.500 0 0 1-16-12L-27 24.500H-35a12 11 0 0 1 0-21.500z"/><rect x="-26.500" y="-48" width="50" height="50" rx="12"/><path d="M-25-33h17M-25-22h17M-25-12h17M5-33h17M5-22h17M5-12h17" stroke-linecap="round" stroke-width="4.500"/></g><path d="M-17-46q-4 22 0 45" fill="none" stroke="#000" stroke-width="1.500"/></svg>
  <!-- iTunes -->
  <svg viewBox="-55 -63 110 134"><defs><linearGradient id="it" x1=".3" x2=".7" y2="1"><stop stop-color="#fb5a5e"/><stop offset=".5" stop-color="#c05ae8"/><stop offset="1" stop-color="#35bdfb"/></linearGradient></defs><circle r="46" fill="url(#it)"/><circle r="41.500" fill="#f6f3f6"/><path d="M-12-23L20-29V12a8 8 0 1 1-4-7V-14L-8-9V18a8 8 0 1 1-4-7z" fill="url(#it)"/></svg>
  <!-- App Store -->
  <svg viewBox="-55 -63 110 134"><defs><linearGradient id="as" x2="0" y2="1"><stop stop-color="#2bc8fb"/><stop offset="1" stop-color="#1e62ee"/></linearGradient></defs><circle cy="1.500" r="45" fill="#0002"/><circle r="45" fill="#ececec"/><circle r="41" fill="url(#as)"/><g fill="none" stroke="#f5f8fc" stroke-width="6" stroke-linecap="round"><path d="M-28-1H-14M-2-1H28" stroke-linecap="butt"/><path d="M-5-18L-22 12M-3-27L19 12"/></g><path d="M-25 11l5 3-8 9z" fill="#f5f8fc"/><path d="M16 14l6-3q4 4 2 13-6-3-8-10z" fill="#f5f8fc"/><circle cx="34.500" cy="-33" r="20.500" fill="#f94846"/><text x="34.500" y="-25.500" font-size="22" text-anchor="middle" fill="#fff">5</text></svg>
  <!-- System Preferences -->
  <svg viewBox="-55 -63 110 134"><defs><linearGradient id="sp" x2="0" y2="1"><stop stop-color="#cfdde6"/><stop offset="1" stop-color="#75777a"/></linearGradient></defs><rect x="-45" y="-41" width="88" height="83" rx="3" fill="url(#sp)"/><circle cx="-1" r="36" fill="#262626" stroke="#8fa6b6"/><circle cx="-1" r="29" fill="none" stroke="#b4b4b2" stroke-width="5" stroke-dasharray="3.300 2.770"/><circle cx="-1" r="24" fill="#4a4a4a" stroke="#b4b4b2" stroke-width="6"/><path d="M-1 0h24M-1 0l-12-21M-1 0l-12 21" stroke="#b9b9b7" stroke-width="5"/><circle cx="-1" r="4" fill="#9a9a98"/><circle cx="34.500" cy="-33" r="20.500" fill="#f94846"/><text x="34.500" y="-25.500" font-size="22" text-anchor="middle" fill="#fff">1</text></svg>
  <!-- PowerPoint -->
  <svg viewBox="-55 -63 110 134"><defs><linearGradient id="pp" x2="0" y2="1"><stop stop-color="#ef5a35"/><stop offset="1" stop-color="#e23018"/></linearGradient><linearGradient id="pd"><stop stop-color="#c32a1c"/><stop offset="1" stop-color="#7c1d18"/></linearGradient></defs><path d="M-6-6Q17-4 16-24L34-14Q32 12 10 11L-10 12z" fill="url(#pd)"/><path d="M-23-44L8-43Q35-40 35-11 34 0 28 5 32-24 4-25H-23a9.500 9.500 0 0 1 0-19z" fill="url(#pp)"/><path d="M-29 5Q-29-6-18-6H-5Q-7-2-7 6V34a11 11 0 0 1-22 0z" fill="#ee4c28"/></svg>
  <!-- Excel -->
  <svg viewBox="-55 -63 110 134"><g fill="none" stroke-width="20" stroke-linecap="round"><path d="M25-31L-27 34" stroke="#2c8031"/><path d="M-28-34L25 29" stroke="#45ae3c"/></g><path d="M-12-4Q4 2 14-7" fill="none" stroke="#338f32" stroke-width="1.500"/></svg>
  <i class="self-start mt-[18px] ml-[23px] w-[2px] h-[98px] bg-[#96948f]"></i>
  <!-- Trash -->
  <svg class="ml-[25px]" viewBox="-55 -63 110 134"><defs><linearGradient id="tr"><stop stop-color="#e9e9ea"/><stop offset=".5" stop-color="#d2d3d5"/><stop offset="1" stop-color="#eeeeef"/></linearGradient></defs><ellipse cx="0" cy="-35" rx="36" ry="7" fill="#c9cacc" stroke="#eee"/><path d="M-30-36l7-10 6 2 7-5 8 4 5 6 5-9 10 6 5 2 7 3-2 9-28 5-26-4z" fill="#f0f0f0"/><path d="M-28-38l8-6 5 8zM-4-42l8 0-2 9zM20-42l9 4-3 6zM-20-33l9-4 5 8z" fill="#5b5b5b"/><path d="M-14-38l10-1 2 9-8-1z" fill="#35b3b8"/><path d="M5-39l10-3 4 8-10 5z" fill="#3d5f9e"/><path d="M-3-38l5 1-3 9z" fill="#8e4b32"/><path d="M-36-35Q0-21 36-35L29 38Q26 45 0 45T-27 38z" fill="url(#tr)" opacity=".93"/><path d="M-22 36Q0 43 23 36L22 41Q0 46-22 41z" fill="#fff" opacity=".8"/></svg>
</footer>

<script>
  // Alphabet index: letters with entries are dark, the current one is enlarged.
  const active = 'ABCEFGHLMS';
  document.getElementById('letters').insertAdjacentHTML('beforeend', [...'ABCDEFGHIJKLMNOPQRSTUVWXYZ'].map(c =>
    c === 'P'
      ? '<div class="w-[84px] h-[84px] -mt-[21px] ml-[1.600px] -mr-[11.400px] z-10 shrink-0 flex items-center justify-center bg-[#033156] ring-1 ring-white text-white text-[54px]">P</div>'
      : `<div class="w-[62px] h-[61px] mt-px pt-[3px] ml-[12.640px] shrink-0 flex items-center justify-center bg-[#d4e9e3] ${active.includes(c) ? 'text-[#033156]' : 'text-white'}">${c}</div>`).join(''));

  const units = [
    ['Physics', 'Unit 1: Physics on the Go', 281, 'WPH01', '15-May-18', 'AM', '1h 30m'],
    ['Physics', 'Unit 2: Physics at Work', 259, 'WPH02', '18-May-18', 'AM', '1h 30m'],
    ['Physics', 'Unit 3: Exploring Physics', 278, 'WPH03', '9-May-18', 'PM', '1h 20m'],
    ['Physics', 'Unit 4: Physics on the Move', 312, 'WPH04', '4-Jun-18', 'PM', '1h 35m'],
    ['Physics', 'Unit 5: Physics from Creation to Collapse', 461, 'WPH05', '8-Jun-18', 'AM', '1h 35m'],
    ['Physics', 'Unit 6: Experimental Physics', 323, 'WPH06', '15-May-18', 'PM', '1h 20m'],
    ['Psychology', 'Unit 1: Social and Cognitive Psychology', 442, 'WPS01', '14-May-18', 'PM', '1h 30m'],
    ['Psychology', 'Unit 2: Biological Psychology, Learning Theories and Development', 752, 'WPS02', '17-May-18', 'PM', '2h 00m'],
    ['Psychology', 'Unit 3: Applications of Psychology', 385, 'WPS03', '4-Jun-18', 'PM', '1h 30m'],
    ['Psychology', 'Unit 4: Clinical Psychology and Psychological Skills', 569, 'WPS04', '8-Jun-18', 'AM', '2h 00m'],
  ];
  document.getElementById('units').insertAdjacentHTML('beforeend', units.map(u => `
    <div class="grid grid-cols-[430px_1021px_181px_204px_113px_174px] h-[45px] leading-[44px] border-b border-[#3a5c7a] shadow-[0_1px_0_#b9c9d6] last:border-b-0 last:shadow-none">
      <div class="pl-[13px] border-r border-[#3a5c7a]"><span data-w="${u[0] === 'Physics' ? 84 : 130}">${u[0]}</span></div>
      <div class="pl-[13px] border-r border-[#3a5c7a]"><span data-w="${u[2]}">${u[1]}</span></div>
      <div class="text-center border-r border-[#3a5c7a]"><span data-w="83">${u[3]}</span></div>
      <div class="text-center border-r border-[#3a5c7a]"><span data-w="${u[4].length > 8 ? 119 : u[4].includes('May') ? 107 : 95}">${u[4]}</span></div>
      <div class="text-center border-r border-[#3a5c7a] ${u[5] === 'AM' ? 'font-medium' : ''}"><span data-w="39">${u[5]}</span></div>
      <div class="text-center"><span data-w="86">${u[6]}</span></div>
    </div>`).join(''));

  const labels = document.querySelectorAll('[data-w]');
  labels.forEach(el => el.classList.add('inline-block', 'whitespace-pre', 'shrink-0'));
  function fit() {
    labels.forEach(el => {
      el.style.letterSpacing = '0px';
      el.style.width = 'max-content';
      const w = +el.dataset.w, n = el.textContent.length;
      el.style.letterSpacing = (w - el.getBoundingClientRect().width) / n + 'px';
      el.style.width = w + 'px';
    });
  }
  fit();
  addEventListener('load', fit);
  document.fonts.ready.then(fit);
  [30, 150, 400].forEach(t => setTimeout(fit, t));
</script>
</body>
</html>
